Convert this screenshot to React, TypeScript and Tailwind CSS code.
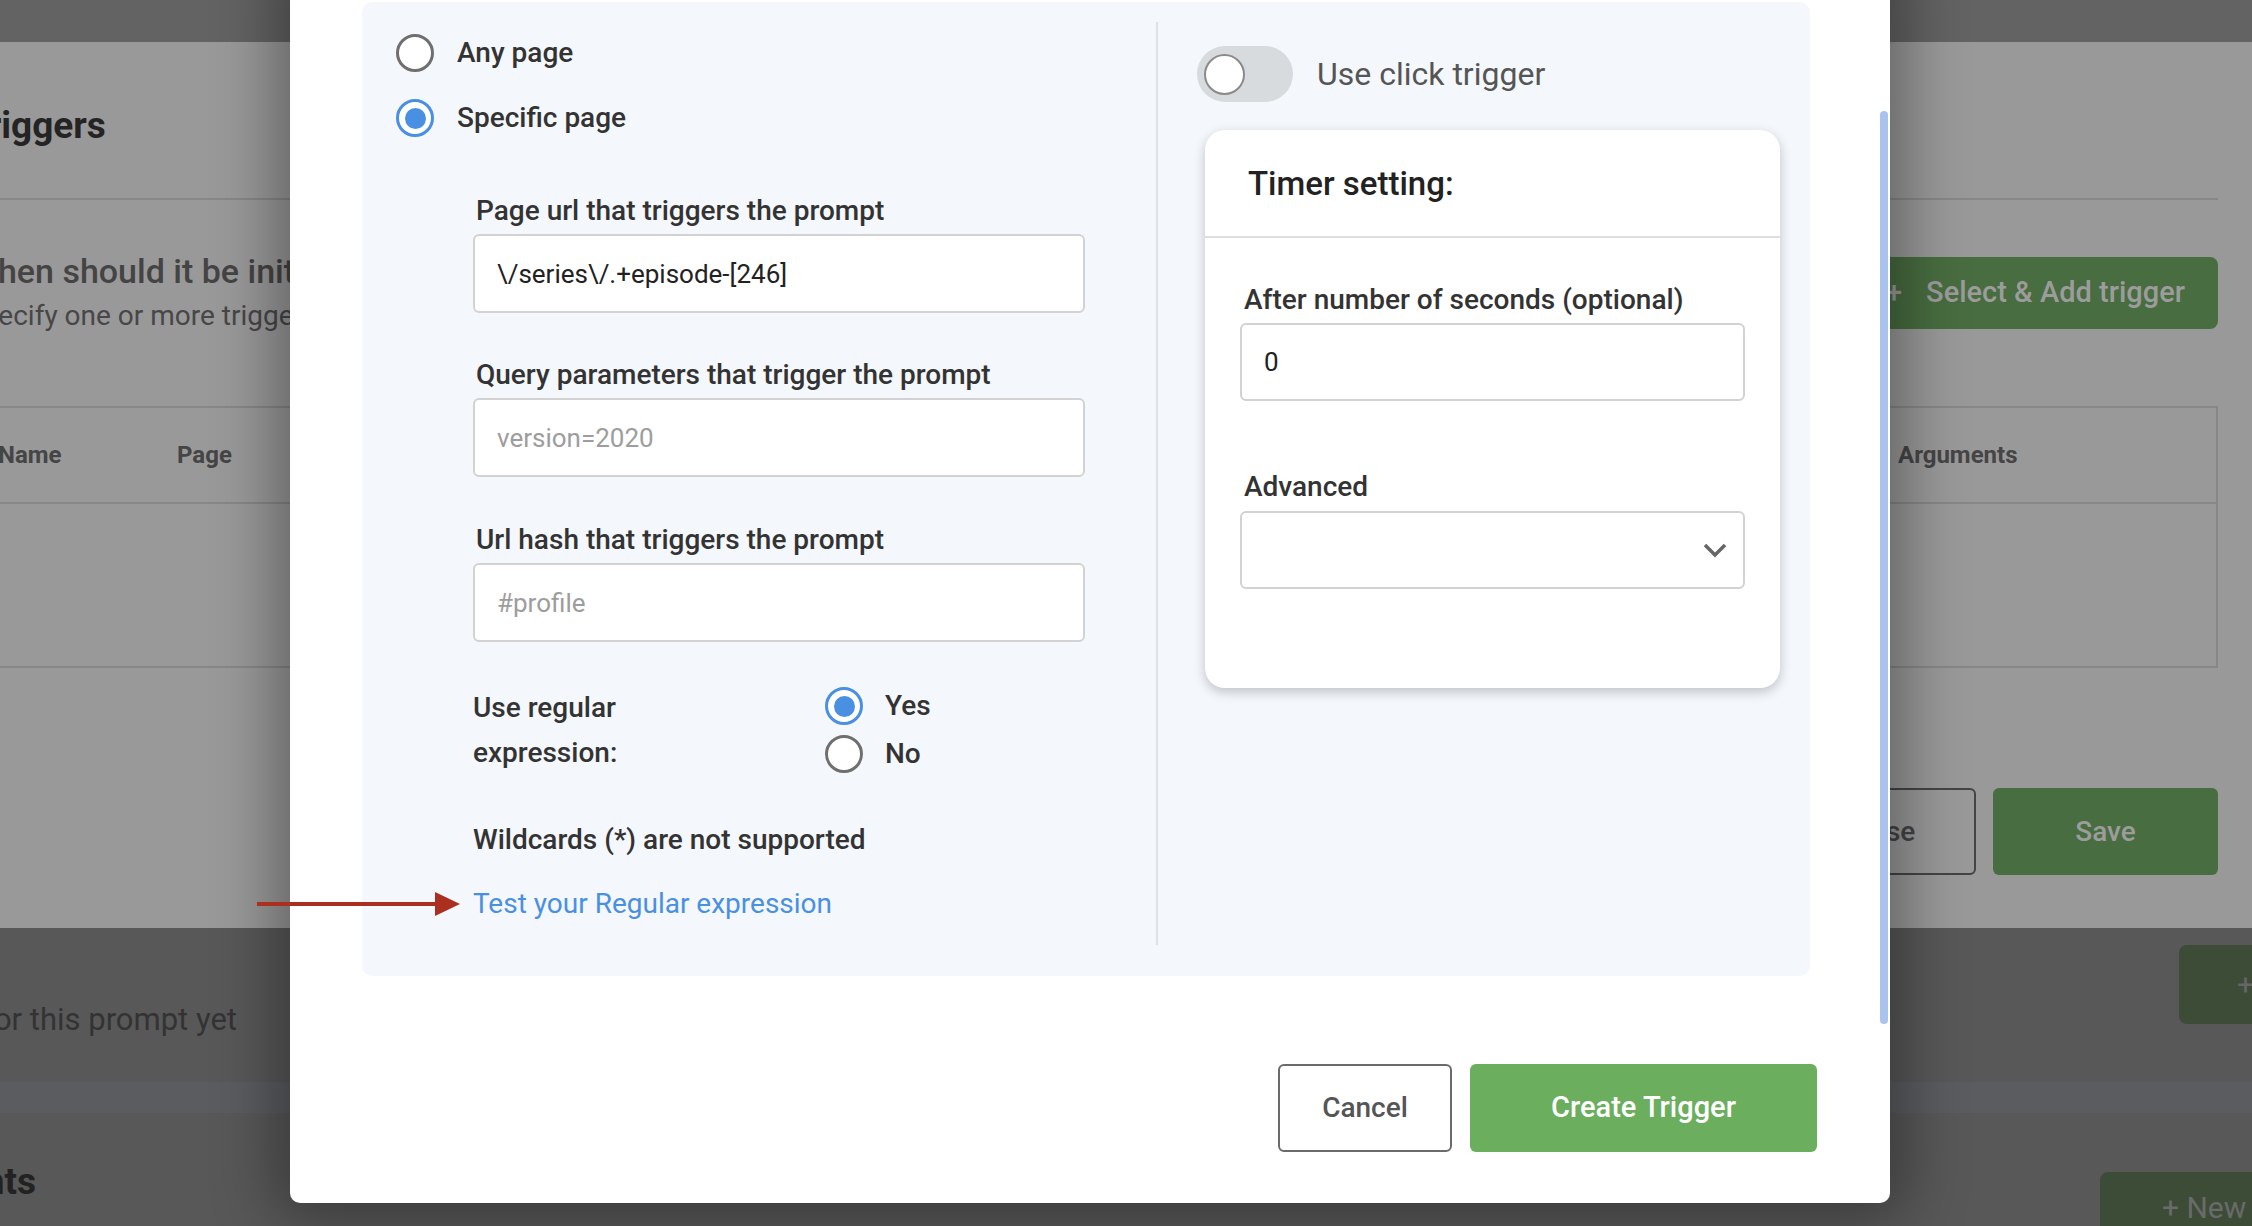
import type { ReactNode } from "react";

function Radio({ checked }: { checked?: boolean }) {
  return (
    <span
      className={`flex h-[38px] w-[38px] shrink-0 items-center justify-center rounded-full border-[3px] bg-white ${
        checked ? "border-[#4a90e2]" : "border-[#6f6f6f]"
      }`}
    >
      {checked && <span className="h-[21px] w-[21px] rounded-full bg-[#4a90e2]" />}
    </span>
  );
}

function RadioRow({ checked, children, gap }: { checked?: boolean; children: ReactNode; gap: string }) {
  return (
    <label className={`flex h-[40px] items-center ${gap}`}>
      <Radio checked={checked} />
      <span className="text-[28px] font-medium text-[#333]">{children}</span>
    </label>
  );
}

function Field({
  label,
  value,
  placeholder,
  className = "",
}: {
  label: string;
  value?: string;
  placeholder?: string;
  className?: string;
}) {
  return (
    <div className={className}>
      <div className="mb-[8px] ml-[3px] text-[28px] font-medium leading-[30px] text-[#333]">{label}</div>
      <input
        readOnly
        defaultValue={value}
        placeholder={placeholder}
        className="h-[79px] w-full rounded-[6px] border-2 border-[#d2d2d2] bg-white px-[22px] text-[26px] text-[#222] outline-none placeholder:text-[#9d9d9d]"
      />
    </div>
  );
}

// the dimmed page sitting behind the dialog
function PageBehind() {
  return (
    <div className="flex h-full flex-col">
      <div className="h-[42px] shrink-0 bg-[#636363]" />

      <div className="h-[886px] shrink-0 bg-[#999999]">
        <div className="ml-[-34px] w-[2252px]">
          <div className="flex h-[158px] items-center border-b-2 border-[#878787] pt-[12px]">
            <h1 className="text-[37px] font-bold text-[#242424]">Triggers</h1>
          </div>

          <div className="flex h-[206px] items-start justify-between">
            <div className="pt-[51px]">
              <p className="ml-[2px] text-[34px] font-medium leading-[40px] text-[#444]">When should it be initiated?</p>
              <p className="mt-[7px] text-[28px] leading-[36px] text-[#474747]">
                Specify one or more triggers for this prompt
              </p>
            </div>
            <div className="mt-[57px] flex h-[72px] items-center gap-[24px] rounded-[8px] bg-[#486d40] pl-[20px] pr-[33px] text-[29px] font-medium text-[#9c9c9c]">
              <span>+</span>
              <span>Select &amp; Add trigger</span>
            </div>
          </div>

          <div className="border-2 border-[#878787]">
            <div className="flex h-[96px] items-center border-b-2 border-[#878787] text-[24px] font-bold text-[#454545]">
              <span className="w-[209px] shrink-0 pl-[30px]">Name</span>
              <span className="w-[1721px] shrink-0">Page</span>
              <span>Arguments</span>
            </div>
            <div className="h-[162px]" />
          </div>

          <div className="mt-[120px] flex justify-end gap-[17px]">
            <div className="flex h-[87px] w-[192px] items-center justify-center rounded-[6px] border-2 border-[#444] text-[28px] font-medium text-[#444]">
              Close
            </div>
            <div className="flex h-[87px] w-[225px] items-center justify-center rounded-[6px] bg-[#486d40] text-[28px] font-medium text-[#9c9c9c]">
              Save
            </div>
          </div>
        </div>
      </div>

      <div className="flex h-[298px] shrink-0 flex-col bg-[#585858]">
        <div className="flex h-[154px] shrink-0 items-start justify-between">
          <div className="mt-[72px] flex w-[237px] justify-end whitespace-nowrap text-[31px] leading-[40px] text-[#333]">
            No triggers for this prompt yet
          </div>
          <div className="mt-[17px] flex h-[79px] w-[73px] items-center rounded-l-[8px] bg-[#3c4c37] pl-[58px] text-[30px] text-[#666]">
            +
          </div>
        </div>
        <div className="h-[31px] shrink-0 bg-[#5b5c60]" />
        <div className="flex min-h-0 flex-1 items-start justify-between overflow-hidden">
          <div className="mt-[49px] flex w-[36px] justify-end whitespace-nowrap text-[37px] font-bold leading-[40px] text-[#222]">
            Events
          </div>
          <div className="mt-[59px] flex h-[70px] w-[152px] items-center rounded-tl-[8px] bg-[#3c4c37] pl-[62px] text-[30px] text-[#6a6a6a]">
            + New
          </div>
        </div>
      </div>
    </div>
  );
}

function PageColumn() {
  return (
    <div className="w-[794px] shrink-0 pl-[34px] pt-[31px]">
      <RadioRow gap="gap-[23px]">Any page</RadioRow>
      <div className="mt-[25px]">
        <RadioRow checked gap="gap-[23px]">
          Specific page
        </RadioRow>
      </div>

      <div className="ml-[77px] mt-[58px] w-[612px]">
        <Field label="Page url that triggers the prompt" value={"\\/series\\/.+episode-[246]"} />
        <Field className="mt-[47px]" label="Query parameters that trigger the prompt" placeholder="version=2020" />
        <Field className="mt-[48px]" label="Url hash that triggers the prompt" placeholder="#profile" />

        <div className="mt-[43px] flex">
          <div className="w-[352px] text-[28px] font-medium leading-[45px] text-[#333]">
            Use regular
            <br />
            expression:
          </div>
          <div className="flex flex-col gap-[8px] pt-[1px]">
            <RadioRow checked gap="gap-[22px]">
              Yes
            </RadioRow>
            <RadioRow gap="gap-[22px]">No</RadioRow>
          </div>
        </div>

        <p className="mt-[50px] text-[28px] font-medium leading-[30px] text-[#333]">Wildcards (*) are not supported</p>
        <a className="mt-[34px] block text-[28px] leading-[30px] text-[#4a90e2]">Test your Regular expression</a>
      </div>
    </div>
  );
}

function TimerColumn() {
  return (
    <div className="flex-1 pl-[39px] pt-[44px]">
      <div className="flex items-center gap-[24px]">
        <div className="flex h-[56px] w-[96px] items-center rounded-full bg-[#d8dbde] pl-[7px]">
          <div className="h-[41px] w-[41px] rounded-full border-2 border-[#8a8a8a] bg-white" />
        </div>
        <span className="text-[32px] text-[#555]">Use click trigger</span>
      </div>

      <div className="ml-[8px] mt-[28px] h-[558px] w-[575px] rounded-[20px] bg-white shadow-[0_4px_12px_rgba(0,0,0,0.22)]">
        <div className="flex h-[108px] items-center border-b-2 border-[#dedede] pl-[43px] pt-[1px]">
          <h3 className="text-[33px] font-medium text-[#222]">Timer setting:</h3>
        </div>
        <div className="px-[35px] pt-[47px]">
          <div className="mb-[8px] ml-[4px] text-[28px] font-medium leading-[30px] text-[#333]">
            After number of seconds (optional)
          </div>
          <input
            readOnly
            defaultValue="0"
            className="h-[78px] w-full rounded-[6px] border-2 border-[#d2d2d2] bg-white px-[22px] text-[26px] text-[#222] outline-none"
          />
          <div className="mb-[9px] ml-[4px] mt-[71px] text-[28px] font-medium leading-[30px] text-[#333]">Advanced</div>
          <div className="flex h-[78px] items-center justify-end rounded-[6px] border-2 border-[#d2d2d2] bg-white pr-[16px]">
            <svg width="24" height="15" viewBox="0 0 24 15" fill="none">
              <polyline points="2,2 12,12 22,2" stroke="#666" strokeWidth="3.5" />
            </svg>
          </div>
        </div>
      </div>
    </div>
  );
}

export default function App() {
  return (
    <div className="relative h-[1226px] w-[2252px] overflow-hidden bg-[#999999] [font-family:Roboto,'Liberation_Sans',sans-serif]">
      <PageBehind />

      {/* dialog */}
      <div className="absolute left-[290px] top-[-40px] h-[1243px] w-[1600px] rounded-[10px] bg-white pl-[72px] pt-[42px] shadow-[0_0_60px_16px_rgba(0,0,0,0.35)]">
        <div className="absolute right-[2px] top-[151px] h-[913px] w-[8px] rounded-full bg-[#a9c3ec]" />

        <div className="flex h-[974px] w-[1448px] rounded-[10px] bg-[#f4f7fc]">
          <PageColumn />
          <div className="mb-[31px] mt-[20px] w-[2px] shrink-0 bg-[#dfe1e4]" />
          <TimerColumn />
        </div>

        <div className="mt-[88px] flex w-[1455px] justify-end gap-[18px]">
          <button className="flex h-[88px] w-[174px] items-center justify-center rounded-[6px] border-2 border-[#6b6b6b] bg-white text-[28px] font-medium text-[#555]">
            Cancel
          </button>
          <button className="flex h-[88px] w-[347px] items-center justify-center rounded-[6px] bg-[#6aae5e] text-[29px] font-medium text-white">
            Create Trigger
          </button>
        </div>
      </div>

      {/* annotation arrow */}
      <svg className="absolute left-[255px] top-[890px]" width="208" height="28" viewBox="0 0 208 28">
        <line x1="2" y1="14" x2="184" y2="14" stroke="#ab2f1f" strokeWidth="4" />
        <polygon points="180,2 205,14 180,26" fill="#ab2f1f" />
      </svg>
    </div>
  );
}
